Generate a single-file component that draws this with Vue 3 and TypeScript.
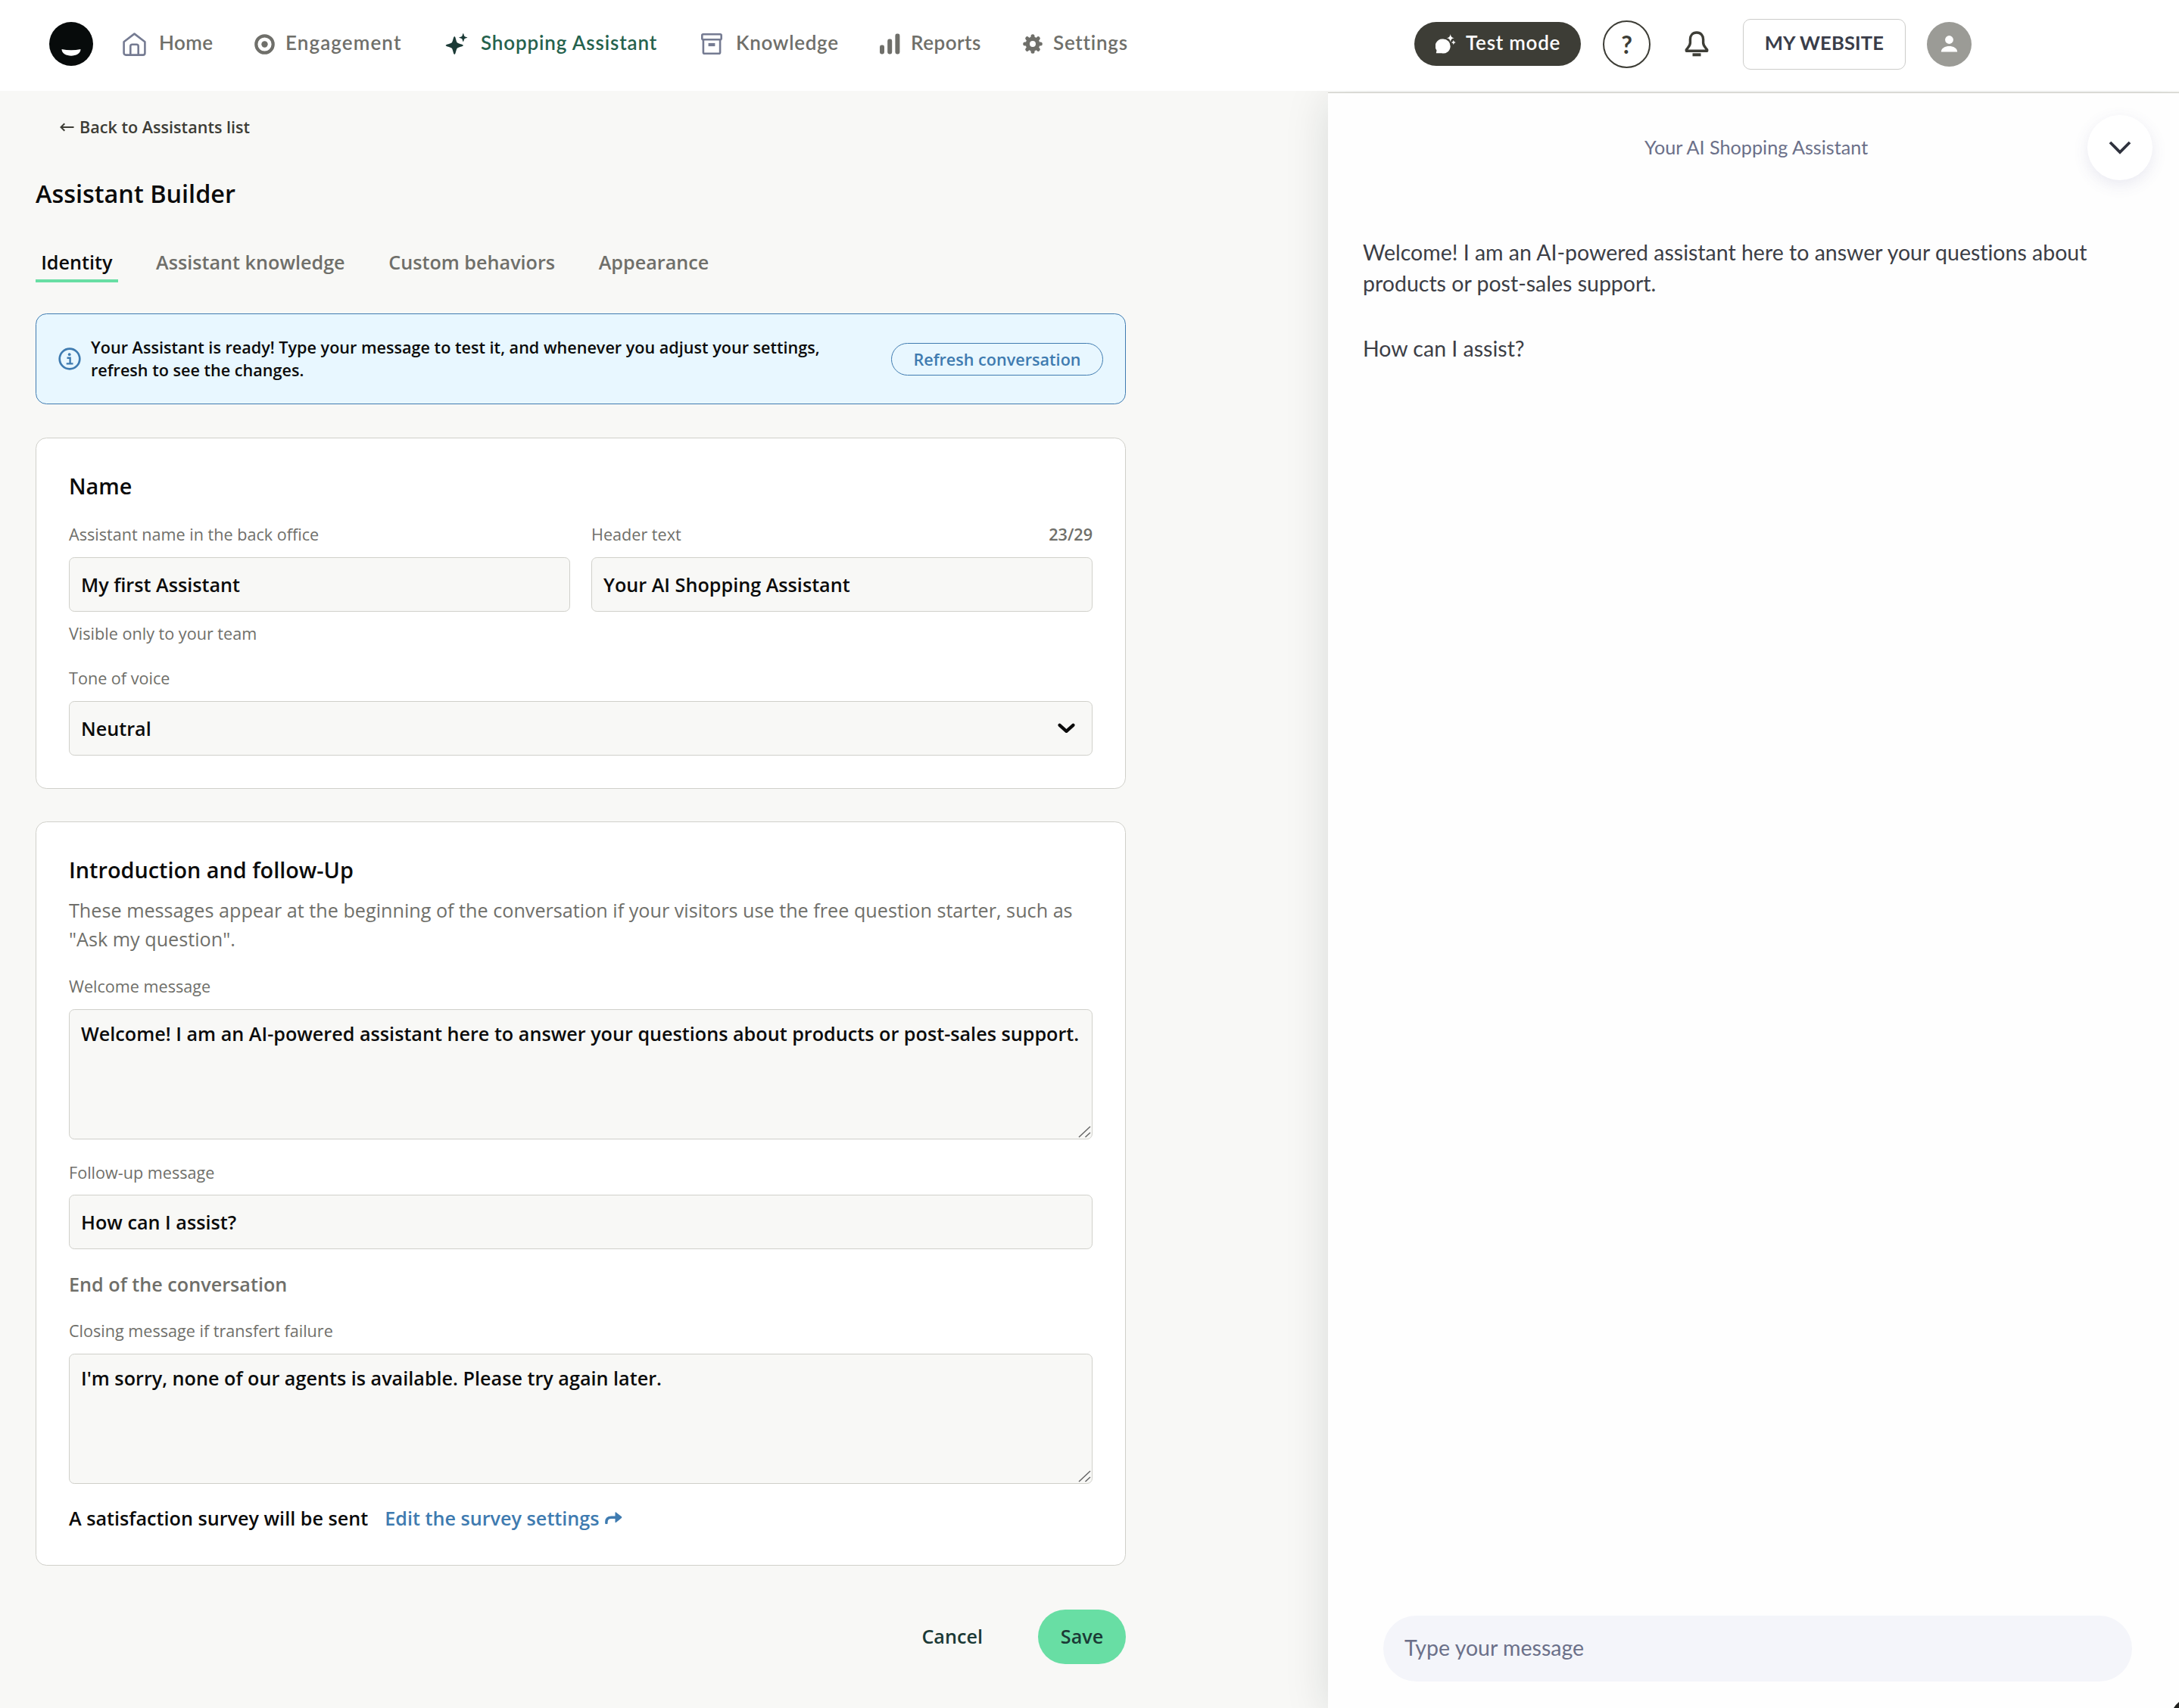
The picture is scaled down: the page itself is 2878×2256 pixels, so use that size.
<script setup lang="ts">
import { ref } from 'vue'

interface NavItem {
  id: string
  label: string
}

const navItems: NavItem[] = [
  { id: 'home', label: 'Home' },
  { id: 'engagement', label: 'Engagement' },
  { id: 'shopping', label: 'Shopping Assistant' },
  { id: 'knowledge', label: 'Knowledge' },
  { id: 'reports', label: 'Reports' },
  { id: 'settings', label: 'Settings' },
]

const tabs: string[] = ['Identity', 'Assistant knowledge', 'Custom behaviors', 'Appearance']
const activeTab = ref<string>('Identity')
const headerText = ref<string>('Your AI Shopping Assistant')
</script>

<template>
  <div class="page">
    <header class="topbar">
      <svg class="logo" viewBox="0 0 58 58">
        <circle cx="29" cy="29" r="29" fill="#070b0b" />
        <path d="M16.5 36 C25 37.6 33 37.6 41.5 36 C41.5 47.5 16.5 47.5 16.5 36Z" fill="#fff" />
      </svg>
      <nav class="nav">
        <a v-for="item in navItems" :key="item.id" class="nav-item" :class="item.id">
          <span class="nav-icon">
            <svg v-if="item.id === 'home'" width="31" height="31" viewBox="0 0 31 31" fill="none" stroke="#757b92" stroke-width="2.6" stroke-linejoin="round">
              <path d="M1.6 12.2 15.5 1.6 29.4 12.2V27a2.6 2.6 0 0 1-2.6 2.6H4.2A2.6 2.6 0 0 1 1.6 27Z" />
              <path d="M10.3 29V18.2a2.4 2.4 0 0 1 2.4-2.4h5.6a2.4 2.4 0 0 1 2.4 2.4V29" />
            </svg>
            <svg v-else-if="item.id === 'engagement'" width="27" height="27" viewBox="0 0 27 27">
              <circle cx="13.5" cy="13.5" r="11.2" fill="none" stroke="#6f6f6a" stroke-width="4.2" />
              <circle cx="13.5" cy="13.5" r="4.2" fill="#6f6f6a" />
            </svg>
            <svg v-else-if="item.id === 'shopping'" width="30" height="28" viewBox="0 0 30 28" fill="#1b3a36">
              <path d="M12.3 4C13.8 4.5 14.2 9.6 15.6 12 17.6 14 23.4 14.4 24 16 23.4 17.6 17.600 18 15.600 20 14.200 22.400 13.800 27.500 12.300 28 10.800 27.500 10.400 22.400 9 20 7 18 1.200 17.600.600 16 1.200 14.400 7 14 9 12 10.400 9.600 10.800 4.500 12.300 4Z" />
              <path d="M23.800 0C24.500.300 24.700 2.900 25.500 3.900 26.500 4.800 29.200 4.900 29.400 5.600 29.200 6.300 26.500 6.400 25.500 7.300 24.700 8.300 24.500 10.900 23.800 11.200 23.100 10.900 22.900 8.300 22.100 7.300 21.100 6.400 18.400 6.300 18.200 5.600 18.400 4.900 21.100 4.800 22.100 3.900 22.900 2.900 23.100.300 23.800 0Z" />
            </svg>
            <svg v-else-if="item.id === 'knowledge'" width="28" height="28" viewBox="0 0 28 28" fill="none" stroke="#757b92" stroke-width="2.6" stroke-linejoin="round">
              <rect x="1.3" y="1.3" width="25.4" height="7" rx="1.5" />
              <path d="M2.9 8.3V25.2a1.5 1.5 0 0 0 1.5 1.5H23.6a1.5 1.5 0 0 0 1.5-1.5V8.3" />
              <path d="M9.6 15H18.4" stroke-width="4.2" stroke-linejoin="miter" />
            </svg>
            <svg v-else-if="item.id === 'reports'" width="28" height="28" viewBox="0 0 28 28" fill="#6f6f6a">
              <rect x="1" y="15.5" width="6" height="12" rx="2.4" />
              <rect x="11.2" y="7.5" width="6" height="20" rx="2.4" />
              <rect x="21.4" y=".5" width="6" height="27" rx="2.4" />
            </svg>
            <svg v-else width="26" height="26" viewBox="0 0 26 26">
              <g stroke="#6f6f6a" stroke-width="5" stroke-linecap="round">
                <path v-for="n in 8" :key="n" d="M13 2.7V6" :transform="`rotate(${n * 45} 13 13)`" />
              </g>
              <circle cx="13" cy="13" r="6.7" fill="none" stroke="#6f6f6a" stroke-width="5.4" />
            </svg>
          </span>
          <span class="nav-label">{{ item.label }}</span>
        </a>
      </nav>
      <div class="tools">
        <button class="test-mode">
          <svg width="27" height="26" viewBox="0 0 27 26" fill="#fff">
            <path d="M10 6.5a9.5 9.5 0 1 1-1.8 18.8H1.6Q.5 25.3 1 24.2L1.5 21.5A9.5 9.5 0 0 1 10 6.5Z" />
            <path d="M19.7 0Q20.2 4.8 24.7 5.3 20.2 5.8 19.7 10.6 19.2 5.8 14.7 5.3 19.2 4.8 19.7 0Z" />
            <path d="M23.8 8Q24.1 10.7 26.7 11 24.1 11.3 23.8 14 23.5 11.3 20.9 11 23.5 10.7 23.8 8Z" />
          </svg>
          <span class="nav-label">Test mode</span>
        </button>
        <button class="help"><span>?</span></button>
        <svg class="bell" width="32" height="34" viewBox="0 0 32 34" fill="none" stroke="#3d3d36" stroke-width="3.4" stroke-linejoin="round">
          <path d="M16 2C10.6 2 7.4 5.8 7.4 11V15.5C7.4 19.5 4.5 21.5 2.3 24.8V26.3H29.7V24.8C27.5 21.5 24.6 19.5 24.6 15.5V11C24.6 5.8 21.4 2 16 2Z" />
          <path d="M10.5 31.3H21.5" stroke-width="4" />
        </svg>
        <button class="site"><span class="nav-label">MY WEBSITE</span></button>
        <svg class="avatar" width="59" height="59" viewBox="0 0 59 59">
          <circle cx="29.5" cy="29.5" r="29.5" fill="#9b9b96" />
          <circle cx="29.5" cy="23.5" r="5.4" fill="#fff" />
          <path d="M18.8 39.6C18.8 29.3 40.2 29.3 40.2 39.6Z" fill="#fff" />
        </svg>
      </div>
    </header>

    <div class="body">
      <main class="builder">
        <a class="back">
          <svg width="19" height="12" viewBox="0 0 19 12" fill="none" stroke="#3d3d36" stroke-width="2">
            <path d="M18.5 6H1.5M6.3 1.2 1.5 6 6.3 10.8" />
          </svg>
          <span>Back to Assistants list</span>
        </a>
        <h1>Assistant Builder</h1>
        <div class="tabs">
          <a v-for="tab in tabs" :key="tab" class="tab" :class="{ active: tab === activeTab }">{{ tab }}</a>
        </div>

        <section class="banner">
          <svg width="30" height="30" viewBox="0 0 30 30" fill="none" stroke="#3f7bb0">
            <circle cx="15" cy="15" r="13.3" stroke-width="2.7" />
            <circle cx="14.7" cy="9.2" r="1.9" fill="#3f7bb0" stroke="none" />
            <path d="M11.5 13.7H15.6V21.4M10.7 21.4H19.5" stroke-width="2.4" />
          </svg>
          <p>Your Assistant is ready! Type your message to test it, and whenever you adjust your settings,<br />refresh to see the changes.</p>
          <button class="refresh">Refresh conversation</button>
        </section>

        <section class="card name-card">
          <h2>Name</h2>
          <div class="columns">
            <div class="field">
              <label class="label">Assistant name in the back office</label>
              <div class="input">My first Assistant</div>
              <span class="helper">Visible only to your team</span>
            </div>
            <div class="field">
              <label class="label"><span>Header text</span><b>23/29</b></label>
              <div class="input">{{ headerText }}</div>
            </div>
          </div>
          <label class="label tone">Tone of voice</label>
          <div class="input select">
            <span>Neutral</span>
            <svg width="23" height="14" viewBox="0 0 23 14" fill="none" stroke="#0b0b0b" stroke-width="4.3" stroke-linecap="round" stroke-linejoin="round">
              <path d="M2.6 2.8 11.5 10.8 20.4 2.8" />
            </svg>
          </div>
        </section>

        <section class="card intro-card">
          <h2>Introduction and follow-Up</h2>
          <p class="desc">These messages appear at the beginning of the conversation if your visitors use the free question starter, such as<br />"Ask my question".</p>
          <label class="label welcome">Welcome message</label>
          <div class="input area">
            Welcome! I am an AI-powered assistant here to answer your questions about products or post-sales support.
            <svg class="grip" width="17" height="16" viewBox="0 0 17 16" stroke="#666" stroke-width="1.5"><path d="M1 15 16 1M9.5 15 16 9" /></svg>
          </div>
          <label class="label follow">Follow-up message</label>
          <div class="input">How can I assist?</div>
          <h3>End of the conversation</h3>
          <label class="label closing">Closing message if transfert failure</label>
          <div class="input area">
            I'm sorry, none of our agents is available. Please try again later.
            <svg class="grip" width="17" height="16" viewBox="0 0 17 16" stroke="#666" stroke-width="1.5"><path d="M1 15 16 1M9.5 15 16 9" /></svg>
          </div>
          <div class="survey">
            <span>A satisfaction survey will be sent</span>
            <a>Edit the survey settings
              <svg width="23" height="16" viewBox="0 0 23 16">
                <path d="M1.9 14.5V13.2C1.9 8.8 4.5 7.2 8.5 7.2H16" fill="none" stroke="#3f7bb0" stroke-width="3.5" stroke-linecap="round" />
                <path d="M13.5.9Q13.6 0 14.6.4L22 6.3Q22.8 7.1 22 7.9L14.6 13.9Q13.6 14.3 13.5 13.4Z" fill="#3f7bb0" />
              </svg>
            </a>
          </div>
        </section>

        <div class="actions">
          <button class="cancel">Cancel</button>
          <button class="save">Save</button>
        </div>
      </main>

      <aside class="preview">
        <div class="preview-head">
          <span class="preview-title">{{ headerText }}</span>
          <button class="collapse">
            <svg width="30" height="20" viewBox="0 0 30 20" fill="none" stroke="#2f323e" stroke-width="3.8">
              <path d="M2 3 15 16 28 3" />
            </svg>
          </button>
        </div>
        <div class="messages">
          <p>Welcome! I am an AI-powered assistant here to answer your questions about<br />products or post-sales support.</p>
          <p>How can I assist?</p>
        </div>
        <div class="composer">Type your message</div>
        <svg class="launcher" width="7" height="8" viewBox="0 0 7 8"><path d="M7 0V8H0Q2.5 3.5 7 0Z" fill="#20211f" /></svg>
      </aside>
    </div>
  </div>
</template>

<style>
body {
  margin: 0;
  overflow: hidden;
}
</style>

<style scoped>
.page {
  width: 2878px;
  height: 2256px;
  overflow: hidden;
  display: flex;
  flex-direction: column;
  background: #f8f8f6;
  font-family: "Open Sans", "Noto Sans", sans-serif;
  font-size: 25.2px;
  color: #0b0b0b;
}
* {
  box-sizing: border-box;
}
h1, h2, h3, p {
  margin: 0;
  font-weight: 600;
}
button {
  margin: 0;
  padding: 0;
  font: inherit;
  background: none;
  border: 0;
  color: inherit;
}
svg {
  display: block;
  flex: none;
}

/* Top bar */
.topbar {
  height: 120px;
  flex: none;
  position: relative;
  z-index: 2;
  display: flex;
  align-items: center;
  padding: 0 0 4px 65px;
  background: #fff;
  font-family: Lato, "Open Sans", sans-serif;
  font-size: 26px;
  font-weight: 600;
  color: #6f6f6a;
}
.logo {
  width: 58px;
  height: 58px;
}
.nav {
  display: flex;
  margin-left: 39px;
  width: 1706px;
}
.nav-item {
  display: grid;
  grid-template-columns: 48px 1fr;
  align-items: center;
}
.nav-icon {
  height: 31px;
  display: flex;
  align-items: center;
}
.nav-label {
  line-height: 32px;
  padding-bottom: 5px;
  white-space: nowrap;
}
.home { width: 174px; letter-spacing: .4px; }
.engagement { width: 252px; grid-template-columns: 41px 1fr; letter-spacing: 1.1px; }
.shopping { width: 338px; grid-template-columns: 47px 1fr; letter-spacing: .85px; color: #25624d; }
.knowledge { width: 235px; grid-template-columns: 46px 1fr; letter-spacing: .7px; }
.reports { width: 190px; grid-template-columns: 42px 1fr; letter-spacing: .5px; }
.settings { grid-template-columns: 40px 1fr; letter-spacing: .75px; }
.tools {
  display: flex;
  align-items: center;
}
.test-mode {
  width: 220px;
  height: 58px;
  border-radius: 29px;
  background: #3d3d36;
  color: #fff;
  display: flex;
  align-items: center;
  gap: 13px;
  padding-left: 28px;
  letter-spacing: .75px;
}
.help {
  width: 63px;
  height: 63px;
  margin-left: 29px;
  border: 2px solid #3d3d36;
  border-radius: 50%;
  color: #3d3d36;
  font-size: 32px;
  font-weight: 700;
  line-height: 59px;
  text-align: center;
}
.bell {
  margin-left: 45px;
}
.site {
  width: 215px;
  height: 67px;
  margin-left: 45px;
  border: 1px solid #ccccca;
  border-radius: 10px;
  color: #3a3d49;
  font-size: 25.6px;
  font-weight: 700;
  letter-spacing: .15px;
}
.site .nav-label {
  display: block;
}
.avatar {
  margin-left: 28px;
}

/* Builder column */
.body {
  flex: 1;
  display: flex;
}
.builder {
  width: 1754px;
  padding: 32px 0 0 47px;
}
.back {
  display: flex;
  align-items: center;
  gap: 7px;
  margin-left: 32px;
  height: 32px;
  font-size: 21.6px;
  font-weight: 600;
  line-height: 30px;
  color: #3d3d36;
}
h1 {
  margin-top: 49px;
  font-size: 32.4px;
  line-height: 44px;
}
.tabs {
  display: flex;
  gap: 43.2px;
  margin-top: 52px;
}
.tab {
  padding: 0 7.2px 6px;
  border-bottom: 4px solid transparent;
  line-height: 34px;
  font-weight: 600;
  color: #6f6f6a;
}
.tab.active {
  color: #0b0b0b;
  border-color: #68dea4;
}
.banner {
  width: 1440px;
  height: 120px;
  margin-top: 41px;
  border: 1px solid #3f7bb0;
  border-radius: 14.4px;
  background: #e8f7ff;
  display: flex;
  align-items: center;
  padding: 0 29px 0 29px;
  font-size: 21.6px;
}
.banner p {
  margin-left: 13px;
  line-height: 30px;
  white-space: nowrap;
}
.refresh {
  width: 280px;
  height: 43px;
  margin-left: auto;
  border: 1px solid #3f7bb0;
  border-radius: 22px;
  color: #3f7bb0;
  font-weight: 600;
}
.card {
  width: 1440px;
  border: 1px solid #d0d0ca;
  border-radius: 14.4px;
  background: #fff;
  padding: 43px;
}
.name-card {
  height: 464px;
  margin-top: 44px;
}
.intro-card {
  height: 983px;
  margin-top: 43px;
}
h2 {
  font-size: 28.8px;
  line-height: 40px;
}
.columns {
  display: grid;
  grid-template-columns: 1fr 1fr;
  gap: 28px;
  margin-top: 29px;
}
.label {
  display: flex;
  justify-content: space-between;
  height: 30px;
  margin-bottom: 15px;
  font-size: 21.6px;
  line-height: 30px;
  color: #6f6f6a;
}
.label b {
  font-weight: 600;
}
.input {
  height: 72px;
  border: 1px solid #d0d0ca;
  border-radius: 7.2px;
  background: #f8f8f6;
  padding: 0 15px;
  line-height: 70px;
  font-weight: 600;
  white-space: nowrap;
}
.helper {
  display: block;
  margin-top: 14px;
  font-size: 21.6px;
  line-height: 30px;
  color: #6f6f6a;
}
.tone {
  margin-top: 29px;
}
.select {
  display: flex;
  justify-content: space-between;
  align-items: center;
  padding-right: 22px;
  line-height: 68px;
}
.desc {
  margin-top: 15px;
  font-weight: 400;
  line-height: 37.8px;
  color: #6f6f6a;
  white-space: nowrap;
}
.welcome {
  margin-top: 28.4px;
}
.area {
  position: relative;
  height: 172px;
  padding-top: 13px;
  line-height: 37.8px;
}
.grip {
  position: absolute;
  right: 1px;
  bottom: 1px;
}
.follow {
  margin-top: 29px;
  margin-bottom: 14px;
}
h3 {
  margin-top: 28px;
  font-size: 25.2px;
  line-height: 36px;
  color: #6f6f6a;
}
.closing {
  margin-top: 29px;
}
.survey {
  display: flex;
  gap: 22px;
  margin-top: 27px;
  line-height: 36px;
  font-weight: 600;
}
.survey a {
  display: flex;
  align-items: center;
  gap: 7px;
  color: #3f7bb0;
}
.actions {
  width: 1440px;
  display: flex;
  justify-content: flex-end;
  align-items: center;
  margin-top: 58px;
  color: #1b3a36;
}
.cancel {
  font-weight: 600;
  margin-right: 73px;
  padding-bottom: 2px;
}
.save {
  width: 116px;
  height: 72px;
  border-radius: 36px;
  background: #68dea4;
  font-weight: 600;
  padding-bottom: 2px;
}

/* Chat preview */
.preview {
  position: relative;
  flex: 1;
  display: flex;
  flex-direction: column;
  margin-top: 2px;
  border-top: 1px solid #ccccc5;
  background: #fefefe;
  box-shadow: 0 8px 54px rgba(0, 30, 30, .13);
  font-family: Lato, "Open Sans", sans-serif;
  font-size: 28.5px;
  font-variant-ligatures: none;
}
.preview-head {
  height: 144px;
  display: flex;
  align-items: center;
  padding-left: 418px;
}
.preview-title {
  width: 585px;
  padding-bottom: 2px;
  font-size: 25.2px;
  color: #6b7089;
}
.collapse {
  width: 86px;
  height: 86px;
  border-radius: 50%;
  background: #fff;
  box-shadow: 0 6px 20px rgba(80, 80, 150, .12);
  display: flex;
  align-items: center;
  justify-content: center;
}
.messages {
  padding: 46px 46px 0;
  line-height: 41.4px;
  color: #3c3e46;
}
.messages p {
  font-weight: 400;
  white-space: nowrap;
}
.messages p + p {
  margin-top: 44.5px;
}
.composer {
  height: 87px;
  margin: auto 62px 35px 73px;
  padding-left: 28px;
  border-radius: 44px;
  background: #f4f5fa;
  line-height: 84px;
  color: #6b7089;
}
.launcher {
  position: absolute;
  right: 0;
  bottom: 0;
}
</style>
